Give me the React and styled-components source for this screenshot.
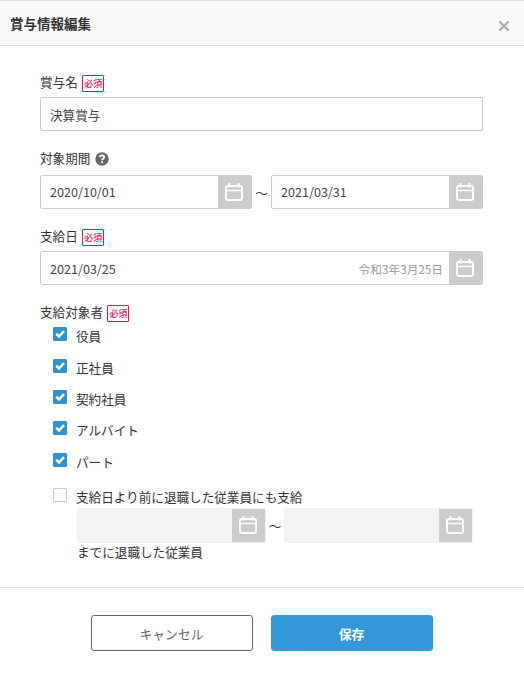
import { useState } from "react";
import styled, { createGlobalStyle } from "styled-components";

const GlobalStyle = createGlobalStyle`
  * {
    box-sizing: border-box;
  }

  body {
    margin: 0;
    background: #fff;
    color: #333;
    font-family: "Noto Sans CJK JP", sans-serif;
    font-size: 12.6px;
    line-height: 20px;
  }

  button,
  input {
    font-family: inherit;
  }
`;

const Modal = styled.div`
  width: 524px;
  height: 676px;
  border-top: 1px solid #ddd;
  background: #fff;
`;

const ModalHeader = styled.header`
  display: flex;
  align-items: center;
  justify-content: space-between;
  height: 45px;
  padding: 0 14px 0 10px;
  border-bottom: 1px solid #ddd;
  background: #fafafa;
`;

const Title = styled.h1`
  margin: 0 0 1px;
  font-size: 13.5px;
  font-weight: 700;
`;

const CloseButton = styled.button`
  display: flex;
  margin-top: 6px;
  padding: 0;
  border: 0;
  background: none;
  cursor: pointer;
`;

const ModalBody = styled.div`
  display: flex;
  flex-direction: column;
  gap: 17px;
  height: 541px;
  padding: 26px 41px 0 40px;
`;

const Field = styled.section`
  display: flex;
  flex-direction: column;
  gap: ${(props) => props.$gap || "4px"};
`;

const FieldLabel = styled.div`
  display: flex;
  align-items: flex-start;
  gap: ${(props) => props.$gap || "4px"};
  height: 21px;
`;

const Required = styled.span`
  width: 22px;
  height: 17px;
  margin-top: 3px;
  padding-left: 1px;
  border: 1px solid #e3124f;
  border-radius: 1px;
  color: #e3124f;
  font-size: 9px;
  font-weight: 500;
  line-height: 16px;
  text-align: center;
  white-space: nowrap;
`;

const HelpIcon = styled.svg`
  margin-top: 4px;
`;

const InputBox = styled.div`
  display: flex;
  flex: ${(props) => (props.$grow ? "1" : "none")};
  align-items: center;
  height: ${(props) => (props.$disabled ? "35px" : "34px")};
  border: 1px solid ${(props) => (props.$disabled ? "#f0f0f0" : "#ccc")};
  border-radius: 2px;
  background: ${(props) => (props.$disabled ? "#f3f3f3" : "#fff")};
  overflow: hidden;
`;

const Input = styled.input`
  flex: 1;
  min-width: 0;
  height: 32px;
  padding: 0 9px ${(props) => (props.$raised ? "2px" : "0")};
  border: 0;
  outline: 0;
  background: transparent;
  color: #444;
  font-size: 12.6px;
`;

const EraDate = styled.span`
  padding: 1px 6px 0 0;
  color: #999;
  font-size: 11.7px;
`;

const CalendarButton = styled.button`
  display: flex;
  align-items: center;
  justify-content: center;
  width: 33px;
  height: 33px;
  padding: 0 1px 0 0;
  border: 0;
  background: #ccc;
  cursor: pointer;
`;

const Range = styled.div`
  display: flex;
  width: ${(props) => props.$width || "auto"};
`;

const Tilde = styled.span`
  width: ${(props) => props.$width};
  padding-top: 8px;
  text-align: center;
`;

const CheckList = styled.div`
  padding: 0.2px 0 0 13px;
`;

const CheckRow = styled.label`
  display: flex;
  gap: 9px;
  height: 31.4px;
  cursor: pointer;
`;

const CheckBox = styled.input`
  appearance: none;
  flex: none;
  width: 14px;
  height: 14px;
  margin: 0;
  border: 1px solid #ccc;
  border-radius: 1px;
  background: #fff;

  &:checked {
    border-color: #2d93cb;
    background: #2d93cb;
  }
`;

const CheckMark = styled.svg`
  flex: none;
  width: 14px;
  margin-left: -23px;
  pointer-events: none;
`;

const CheckText = styled.span`
  margin-top: -1px;
`;

const RetiredSection = styled.div`
  padding-top: 3.8px;

  ${CheckRow} {
    height: 20px;
  }
`;

const RetiredPeriod = styled.div`
  padding-left: 24px;
`;

const RetiredNote = styled.div`
  line-height: 18px;
`;

const ModalFooter = styled.footer`
  display: flex;
  justify-content: center;
  gap: 18px;
  padding-top: 27px;
  border-top: 1px solid #ddd;
`;

const Button = styled.button`
  width: 162px;
  height: 36px;
  padding: 0 1px 0 0;
  border: 1px solid ${(props) => (props.$primary ? "#3498db" : "#666")};
  border-radius: 3px;
  background: ${(props) => (props.$primary ? "#3498db" : "#fff")};
  color: ${(props) => (props.$primary ? "#fff" : "#666")};
  font-size: 12.8px;
  font-weight: ${(props) => (props.$primary ? 700 : 400)};
  cursor: pointer;
`;

const CalendarIcon = () => (
  <svg width="20" height="20" viewBox="0 0 20 20" fill="none" stroke="#fff">
    <rect x="2" y="4" width="16" height="14" rx="1.5" strokeWidth="1.9" />
    <path d="M2 8.5h16" strokeWidth="1.3" />
    <path d="M5.5 1v4.5M14.5 1v4.5" strokeWidth="2" />
  </svg>
);

const DateInput = ({ value, era, disabled, grow = true }) => {
  const [date, setDate] = useState(value);

  return (
    <InputBox $grow={grow} $disabled={disabled}>
      <Input
        value={date}
        disabled={disabled}
        $raised={grow}
        onChange={(e) => setDate(e.target.value)}
      />
      {era && <EraDate>{era}</EraDate>}
      <CalendarButton disabled={disabled}>
        <CalendarIcon />
      </CalendarButton>
    </InputBox>
  );
};

const CheckItem = ({ label, checked, onChange }) => (
  <CheckRow>
    <CheckBox type="checkbox" checked={checked} onChange={onChange} />
    {checked && (
      <CheckMark height="14" viewBox="0 0 14 14" fill="none">
        <path d="M3.2 6.7 6 9.4l5-5.3" stroke="#fff" strokeWidth="2.6" />
      </CheckMark>
    )}
    <CheckText>{label}</CheckText>
  </CheckRow>
);

const targets = ["役員", "正社員", "契約社員", "アルバイト", "パート"];

const App = () => {
  const [name, setName] = useState("決算賞与");
  const [selected, setSelected] = useState(targets);
  const [includeRetired, setIncludeRetired] = useState(false);

  const toggleTarget = (target) => {
    setSelected(
      selected.includes(target)
        ? selected.filter((item) => item !== target)
        : [...selected, target]
    );
  };

  return (
    <>
      <GlobalStyle />
      <Modal>
        <ModalHeader>
          <Title>賞与情報編集</Title>
          <CloseButton aria-label="閉じる">
            <svg width="12" height="12" viewBox="0 0 12 12">
              <path d="M1.5 1.5l9 9M10.5 1.5l-9 9" stroke="#aaa" strokeWidth="2.2" />
            </svg>
          </CloseButton>
        </ModalHeader>

        <ModalBody>
          <Field>
            <FieldLabel>
              賞与名<Required>必須</Required>
            </FieldLabel>
            <InputBox>
              <Input value={name} onChange={(e) => setName(e.target.value)} />
            </InputBox>
          </Field>

          <Field $gap="6px">
            <FieldLabel $gap="5px">
              対象期間
              <HelpIcon width="14" height="14" viewBox="0 0 14 14" fill="none">
                <circle cx="7" cy="7" r="6.7" fill="#666" />
                <path
                  d="M4.8 5.3c.1-1.3 1-1.9 2.2-1.9 1.3 0 2.2.7 2.2 1.8C9.2 6.7 7 6.7 7 8.3"
                  stroke="#fff"
                  strokeWidth="1.7"
                />
                <path d="M7 9.3v1.8" stroke="#fff" strokeWidth="1.8" />
              </HelpIcon>
            </FieldLabel>
            <Range>
              <DateInput value="2020/10/01" />
              <Tilde $width="19px">～</Tilde>
              <DateInput value="2021/03/31" />
            </Range>
          </Field>

          <Field>
            <FieldLabel>
              支給日<Required>必須</Required>
            </FieldLabel>
            <DateInput value="2021/03/25" era="令和3年3月25日" grow={false} />
          </Field>

          <Field>
            <FieldLabel>
              支給対象者<Required>必須</Required>
            </FieldLabel>
            <CheckList>
              {targets.map((target) => (
                <CheckItem
                  key={target}
                  label={target}
                  checked={selected.includes(target)}
                  onChange={() => toggleTarget(target)}
                />
              ))}
              <RetiredSection>
                <CheckItem
                  label="支給日より前に退職した従業員にも支給"
                  checked={includeRetired}
                  onChange={() => setIncludeRetired(!includeRetired)}
                />
                <RetiredPeriod>
                  <Range $width="396px">
                    <DateInput value="" disabled={!includeRetired} />
                    <Tilde $width="18px">～</Tilde>
                    <DateInput value="" disabled={!includeRetired} />
                  </Range>
                  <RetiredNote>までに退職した従業員</RetiredNote>
                </RetiredPeriod>
              </RetiredSection>
            </CheckList>
          </Field>
        </ModalBody>

        <ModalFooter>
          <Button>キャンセル</Button>
          <Button $primary>保存</Button>
        </ModalFooter>
      </Modal>
    </>
  );
};

export default App;
